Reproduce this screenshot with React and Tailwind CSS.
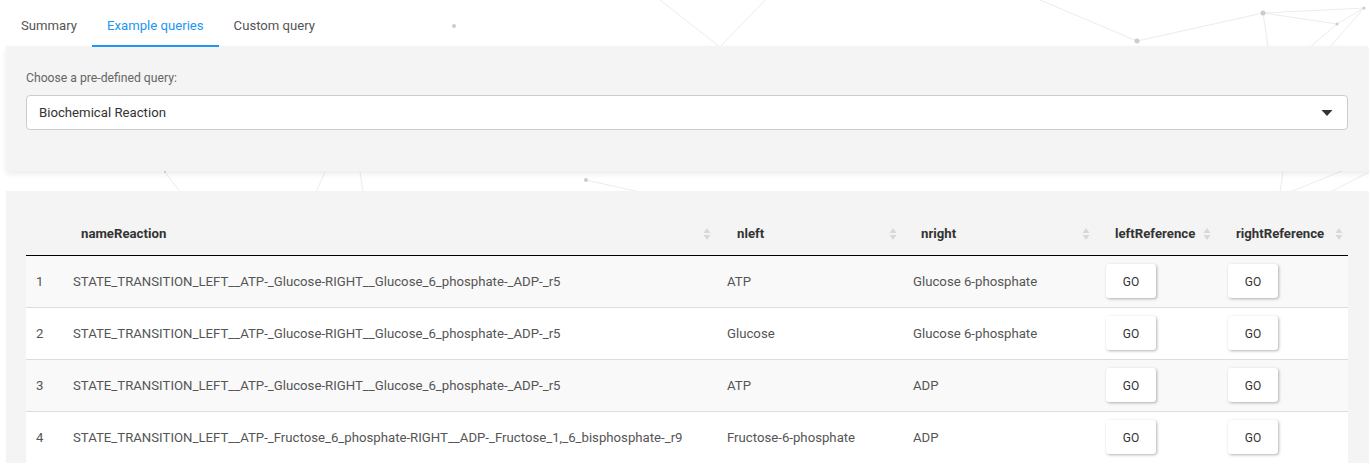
import React from 'react';

const rows = [
  { n: 1, name: 'STATE_TRANSITION_LEFT__ATP-_Glucose-RIGHT__Glucose_6_phosphate-_ADP-_r5', left: 'ATP', right: 'Glucose 6-phosphate' },
  { n: 2, name: 'STATE_TRANSITION_LEFT__ATP-_Glucose-RIGHT__Glucose_6_phosphate-_ADP-_r5', left: 'Glucose', right: 'Glucose 6-phosphate' },
  { n: 3, name: 'STATE_TRANSITION_LEFT__ATP-_Glucose-RIGHT__Glucose_6_phosphate-_ADP-_r5', left: 'ATP', right: 'ADP' },
  { n: 4, name: 'STATE_TRANSITION_LEFT__ATP-_Fructose_6_phosphate-RIGHT__ADP-_Fructose_1,_6_bisphosphate-_r9', left: 'Fructose-6-phosphate', right: 'ADP' },
];

const SortIcon = () => (
  <svg width="8" height="14" viewBox="0 0 8 14" className="shrink-0">
    <path d="M4 1 L7.5 6 L0.5 6 Z" fill="#d8d8d8" />
    <path d="M4 13 L7.5 8 L0.5 8 Z" fill="#d8d8d8" />
  </svg>
);

const GoButton = () => (
  <button className="w-[50px] h-[34px] pt-px bg-white rounded-[3px] text-[12px] text-[#333] shadow-[1px_1px_3px_rgba(0,0,0,0.3)]">
    GO
  </button>
);

const Background = () => (
  <svg className="absolute inset-0 pointer-events-none" width="1369" height="463">
    <g stroke="#ececec" strokeWidth="1" fill="none">
      <line x1="1137" y1="41" x2="1263" y2="13" />
      <line x1="1263" y1="13" x2="1337" y2="24" />
      <line x1="1263" y1="13" x2="1364" y2="8" />
      <line x1="1337" y1="24" x2="1364" y2="8" />
      <line x1="1337" y1="24" x2="1310" y2="47" />
      <line x1="1364" y1="8" x2="1330" y2="47" />
      <line x1="1263" y1="13" x2="1268" y2="47" />
      <line x1="1137" y1="41" x2="1040" y2="0" />
      <line x1="660" y1="0" x2="720" y2="47" />
      <line x1="765" y1="0" x2="720" y2="47" />
      <line x1="1280" y1="192" x2="1283" y2="172" />
      <line x1="1290" y1="192" x2="1369" y2="160" />
      <line x1="1330" y1="192" x2="1369" y2="172" />
      <line x1="165" y1="172" x2="180" y2="192" />
      <line x1="325" y1="172" x2="316" y2="192" />
      <line x1="360" y1="172" x2="363" y2="192" />
      <line x1="586" y1="180" x2="640" y2="192" />
    </g>
    <g fill="#cccccc">
      <circle cx="454" cy="26" r="2" />
      <circle cx="1137" cy="41" r="2.5" />
      <circle cx="1263" cy="13" r="2.5" />
      <circle cx="1337" cy="24" r="1.5" />
      <circle cx="1364" cy="8" r="1.5" />
      <circle cx="586" cy="180" r="2" />
      <circle cx="165" cy="172" r="1" />
    </g>
  </svg>
);

export default function App() {
  return (
    <div className="relative w-[1369px] h-[463px] overflow-hidden bg-white font-['Roboto',sans-serif]">
      <Background />
      <div className="relative pl-[6px]">
        {/* Tabs */}
        <div className="flex w-fit whitespace-nowrap border-b border-[#dddddd] text-[13.15px] h-[47px]">
          <div className="px-[15px] pt-[6px] flex items-center text-[#555]">Summary</div>
          <div className="px-[15px] pt-[6px] flex items-center text-[#2196f3] border-b-2 border-[#2196f3] -mb-px">Example queries</div>
          <div className="px-[15px] pt-[6px] flex items-center text-[#555]">Custom query</div>
        </div>

        {/* Query chooser */}
        <div className="bg-[#f4f4f4] rounded-tr-[3px] h-[125px] -mt-px shadow-[0_3px_6px_rgba(0,0,0,0.08)] px-[20px] pt-[24px]">
          <div className="text-[12.2px] text-[#666] leading-[16px]">Choose a pre-defined query:</div>
          <div className="mt-[9px] h-[35px] w-[1322px] bg-white border border-[#cccccc] rounded-[4px] flex items-center justify-between pl-[12px] pr-[14px]">
            <span className="text-[13.2px] text-[#333]">Biochemical Reaction</span>
            <svg width="12" height="8" viewBox="0 0 12 8">
              <path d="M0.5 1 L11.5 1 L6 7 Z" fill="#333" />
            </svg>
          </div>
        </div>

        {/* Table panel */}
        <div className="bg-[#f4f4f4] mt-[20px] h-[280px] px-[20px] pt-[18px]">
          <table className="w-[1322px] table-fixed border-collapse text-[13.2px] text-[#555]">
            <colgroup>
              <col className="w-[37px]" />
              <col className="w-[657px]" />
              <col className="w-[185px]" />
              <col className="w-[193px]" />
              <col className="w-[122px]" />
              <col className="w-[128px]" />
            </colgroup>
            <thead>
              <tr className="h-[46px] border-b border-black">
                <th></th>
                <th className="text-left font-bold text-[#333] pl-[18px] pr-[9px] pt-[4px]">
                  <div className="flex items-center justify-between"><span>nameReaction</span><SortIcon /></div>
                </th>
                <th className="text-left font-bold text-[#333] pl-[17px] pr-[8px] pt-[4px]">
                  <div className="flex items-center justify-between"><span>nleft</span><SortIcon /></div>
                </th>
                <th className="text-left font-bold text-[#333] pl-[16px] pr-[8px] pt-[4px]">
                  <div className="flex items-center justify-between"><span>nright</span><SortIcon /></div>
                </th>
                <th className="text-left font-bold text-[#333] pl-[17px] pr-[9px] pt-[4px]">
                  <div className="flex items-center justify-between"><span>leftReference</span><SortIcon /></div>
                </th>
                <th className="text-left font-bold text-[#333] pl-[16px] pr-[5px] pt-[4px]">
                  <div className="flex items-center justify-between"><span>rightReference</span><SortIcon /></div>
                </th>
              </tr>
            </thead>
            <tbody>
              {rows.map((r, i) => (
                <tr key={r.n} className={`h-[52px] border-b border-[#dddddd] ${i % 2 === 0 ? 'bg-[#f9f9f9]' : 'bg-white'}`}>
                  <td className="pl-[10px] pt-[2px]">{r.n}</td>
                  <td className="pl-[10px] pt-[2px] whitespace-nowrap">{r.name}</td>
                  <td className="pl-[7px] pt-[2px]">{r.left}</td>
                  <td className="pl-[8px] pt-[2px]">{r.right}</td>
                  <td className="pl-[8px]"><GoButton /></td>
                  <td className="pl-[8px]"><GoButton /></td>
                </tr>
              ))}
            </tbody>
          </table>
        </div>
      </div>
    </div>
  );
}
